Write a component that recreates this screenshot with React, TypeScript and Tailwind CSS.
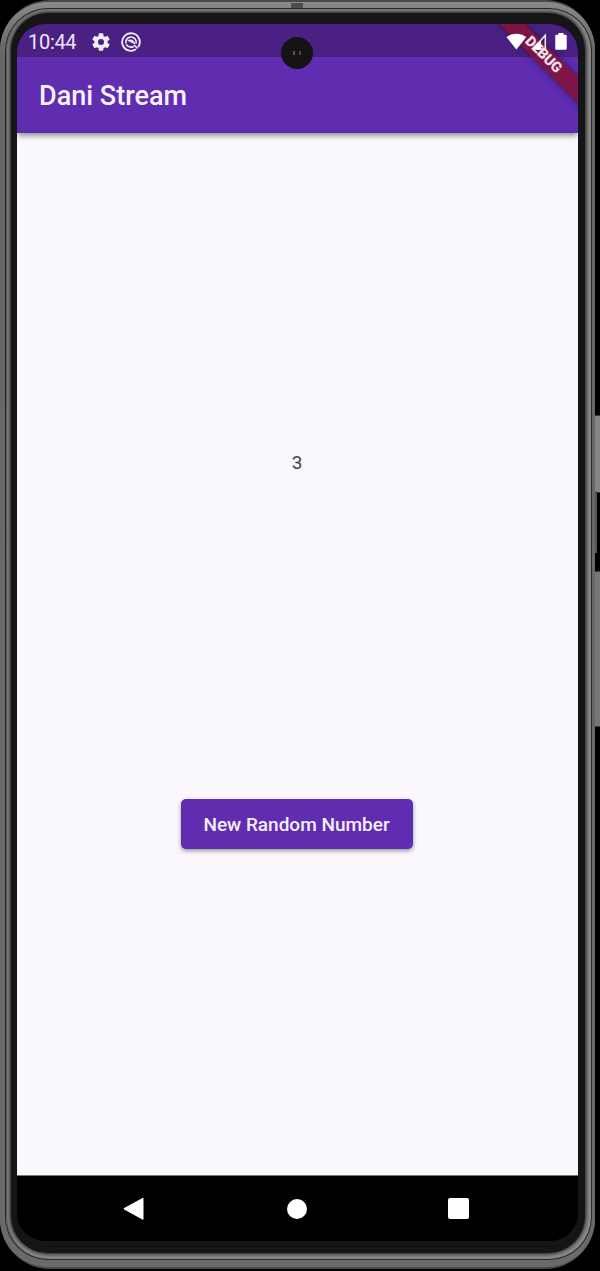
import React from "react";

function GearIcon() {
  return (
    <svg viewBox="0 0 24 24" className="h-[22px] w-[22px] fill-[#f1eaf7]">
      <path d="M19.14 12.94c.04-.3.06-.61.06-.94 0-.32-.02-.64-.07-.94l2.03-1.58a.49.49 0 0 0 .12-.61l-1.92-3.32a.49.49 0 0 0-.59-.22l-2.39.96c-.5-.38-1.03-.7-1.62-.94l-.36-2.54A.48.48 0 0 0 13.92 2.4h-3.84a.47.47 0 0 0-.47.41l-.36 2.54c-.59.24-1.13.57-1.62.94l-2.39-.96a.48.48 0 0 0-.59.22L2.74 8.87a.47.47 0 0 0 .12.61l2.03 1.58c-.05.3-.09.63-.09.94s.02.64.07.94l-2.03 1.58a.49.49 0 0 0-.12.61l1.92 3.32c.12.22.37.29.59.22l2.39-.96c.5.38 1.03.7 1.62.94l.36 2.54c.05.24.24.41.48.41h3.84c.24 0 .44-.17.47-.41l.36-2.54c.59-.24 1.13-.56 1.62-.94l2.39.96c.22.08.47 0 .59-.22l1.92-3.32a.47.47 0 0 0-.12-.61zM12 15.3A3.3 3.3 0 1 1 12 8.7a3.3 3.3 0 0 1 0 6.6z" />
    </svg>
  );
}

function PrivacyIcon() {
  return (
    <svg viewBox="0 0 20 20" className="h-5 w-5" fill="none" stroke="#f1eaf7">
      <path d="M14.9 17.3A8.8 8.8 0 1 1 17.2 15" strokeWidth="1.9" />
      <path d="M5 11.6A5.2 5.2 0 1 1 15 11.6" strokeWidth="1.6" />
      <path d="M6.2 8.4C9 6.4 13.6 7.2 14.2 12.6Z" fill="#f1eaf7" stroke="none" />
      <path d="M5.2 12.4C6.8 14.8 9.6 15.6 12.6 14.6" strokeWidth="1.8" />
      <path d="M13 13L16.6 16.4" strokeWidth="1.6" />
    </svg>
  );
}

function StatusBar() {
  return (
    <div className="flex h-[33px] shrink-0 items-center bg-[#4a2183] pl-[11px] pr-[10px] pt-[2px] text-[#eee6f6]">
      <span className="w-[62px] text-[20px] leading-none tracking-[-0.3px]">10:44</span>
      <GearIcon />
      <span className="ml-[9px]">
        <PrivacyIcon />
      </span>
      <svg viewBox="0 0 62 20" className="relative z-30 ml-auto h-5 w-[62px]">
        <path d="M0.5 5.1C6.3.5 14.5.5 20.3 5.1L10.4 17.6Z" fill="#fff" />
        <path d="M39.3 3.2V17H27.3Z" fill="none" stroke="#eee" strokeWidth="1.5" />
        <path d="M27 17.5L35 8.5V17.5Z" fill="#fff" />
        <path d="M50.5 2.8H52.5V1H57.5V2.8H59.5Q60.7 2.8 60.7 4V16.5Q60.7 17.8 59.5 17.8H50.5Q49.3 17.8 49.3 16.5V4Q49.3 2.8 50.5 2.8Z" fill="#fff" />
      </svg>
    </div>
  );
}

function DebugRibbon() {
  return (
    <div className="absolute right-[-36px] top-[23px] z-20 flex h-[18px] w-[140px] rotate-45 items-center justify-center bg-[#82123be8] pr-[3px] text-[14.5px] font-black leading-none tracking-[-0.3px] text-[#efe3ec] shadow-[0_0_7px_#0007]">
      DEBUG
    </div>
  );
}

function NavigationBar() {
  return (
    <nav className="flex h-[66px] shrink-0 items-center border-t border-[#777] bg-black pl-[106px]">
      <svg viewBox="0 0 22 24" className="h-6 w-[22px] fill-white">
        <path d="M1.2 11L19.5.9Q20.5.4 20.5 1.5V22Q20.5 23.2 19.4 22.5L1.2 12.6Q0 11.8 1.2 11Z" />
      </svg>
      <div className="ml-[142px] size-5 rounded-full bg-white" />
      <div className="ml-[141px] size-[21px] rounded-[2px] bg-white" />
    </nav>
  );
}

export default function App() {
  return (
    <div className="relative h-[1271px] w-[600px] overflow-hidden bg-black font-['Roboto',sans-serif]">
      <div className="absolute left-[594px] top-[415px] h-[78px] w-[8px] rounded-[2px] border border-[#3b3b3b] bg-[#858585]" />
      <div className="absolute left-[594px] top-[493px] h-[60px] w-[3px] bg-[#555]" />
      <div className="absolute left-[594px] top-[571px] h-[156px] w-[8px] rounded-[2px] border border-[#3b3b3b] bg-[#777]" />
      <div className="relative h-full w-[595px] pb-[2px]">
        <div className="h-full rounded-[50px] bg-[#4a4a4a] pb-[2px] pt-[2px]">
          <div className="h-full rounded-[48px] bg-linear-to-b from-[#8a8a8a] from-0% via-[#666] via-4% to-[#6a6a6a] pb-[7px] pl-[5px] pr-[3px] pt-[6px]">
            <div className="h-full rounded-[43px] bg-[#292929] p-px">
              <div className="h-full rounded-[42px] bg-[#8c8c8c] pb-[6px] pl-[5px] pr-[6px] pt-[4px] shadow-[inset_1px_0_1px_#555]">
                <div className="h-full rounded-[37px] bg-[#151517] pb-[12px] pl-[6px] pr-[7px] pt-[11px] shadow-[0_0_4px_1px_#151517]">
                  <main className="relative flex h-full flex-col overflow-hidden rounded-[28px] bg-black">
                    <StatusBar />
                    <header className="z-10 flex h-[76px] shrink-0 items-center bg-[#602cb0] pl-[22px] pt-[3px] text-[27px] font-medium text-[#f7f1fc] shadow-[0_4px_5px_-1px_#0006]">
                      Dani Stream
                    </header>
                    <section className="flex flex-1 flex-col items-center bg-[#faf8fc] pt-[318px]">
                      <span className="h-6 pr-px text-[19px] leading-6 text-[#444]">3</span>
                      <button className="mr-px mt-[324px] h-[50px] w-[232px] rounded-[5px] bg-[#602cb0] pr-px pt-[2px] text-[19px] font-medium text-[#f5effb] shadow-[0_2px_4px_#0006]">
                        New Random Number
                      </button>
                    </section>
                    <NavigationBar />
                    <DebugRibbon />
                  </main>
                </div>
              </div>
            </div>
          </div>
        </div>
      </div>
      <div className="absolute left-[281px] top-[37px] z-40 flex size-8 items-center justify-center gap-[4px] rounded-full bg-[#151316]">
        <i className="h-1 w-[2px] bg-[#555]" />
        <i className="h-1 w-[2px] bg-[#7b3448]" />
      </div>
      <div className="absolute left-[291px] top-[3px] h-[5px] w-3 bg-[#4d4d4d]" />
    </div>
  );
}
